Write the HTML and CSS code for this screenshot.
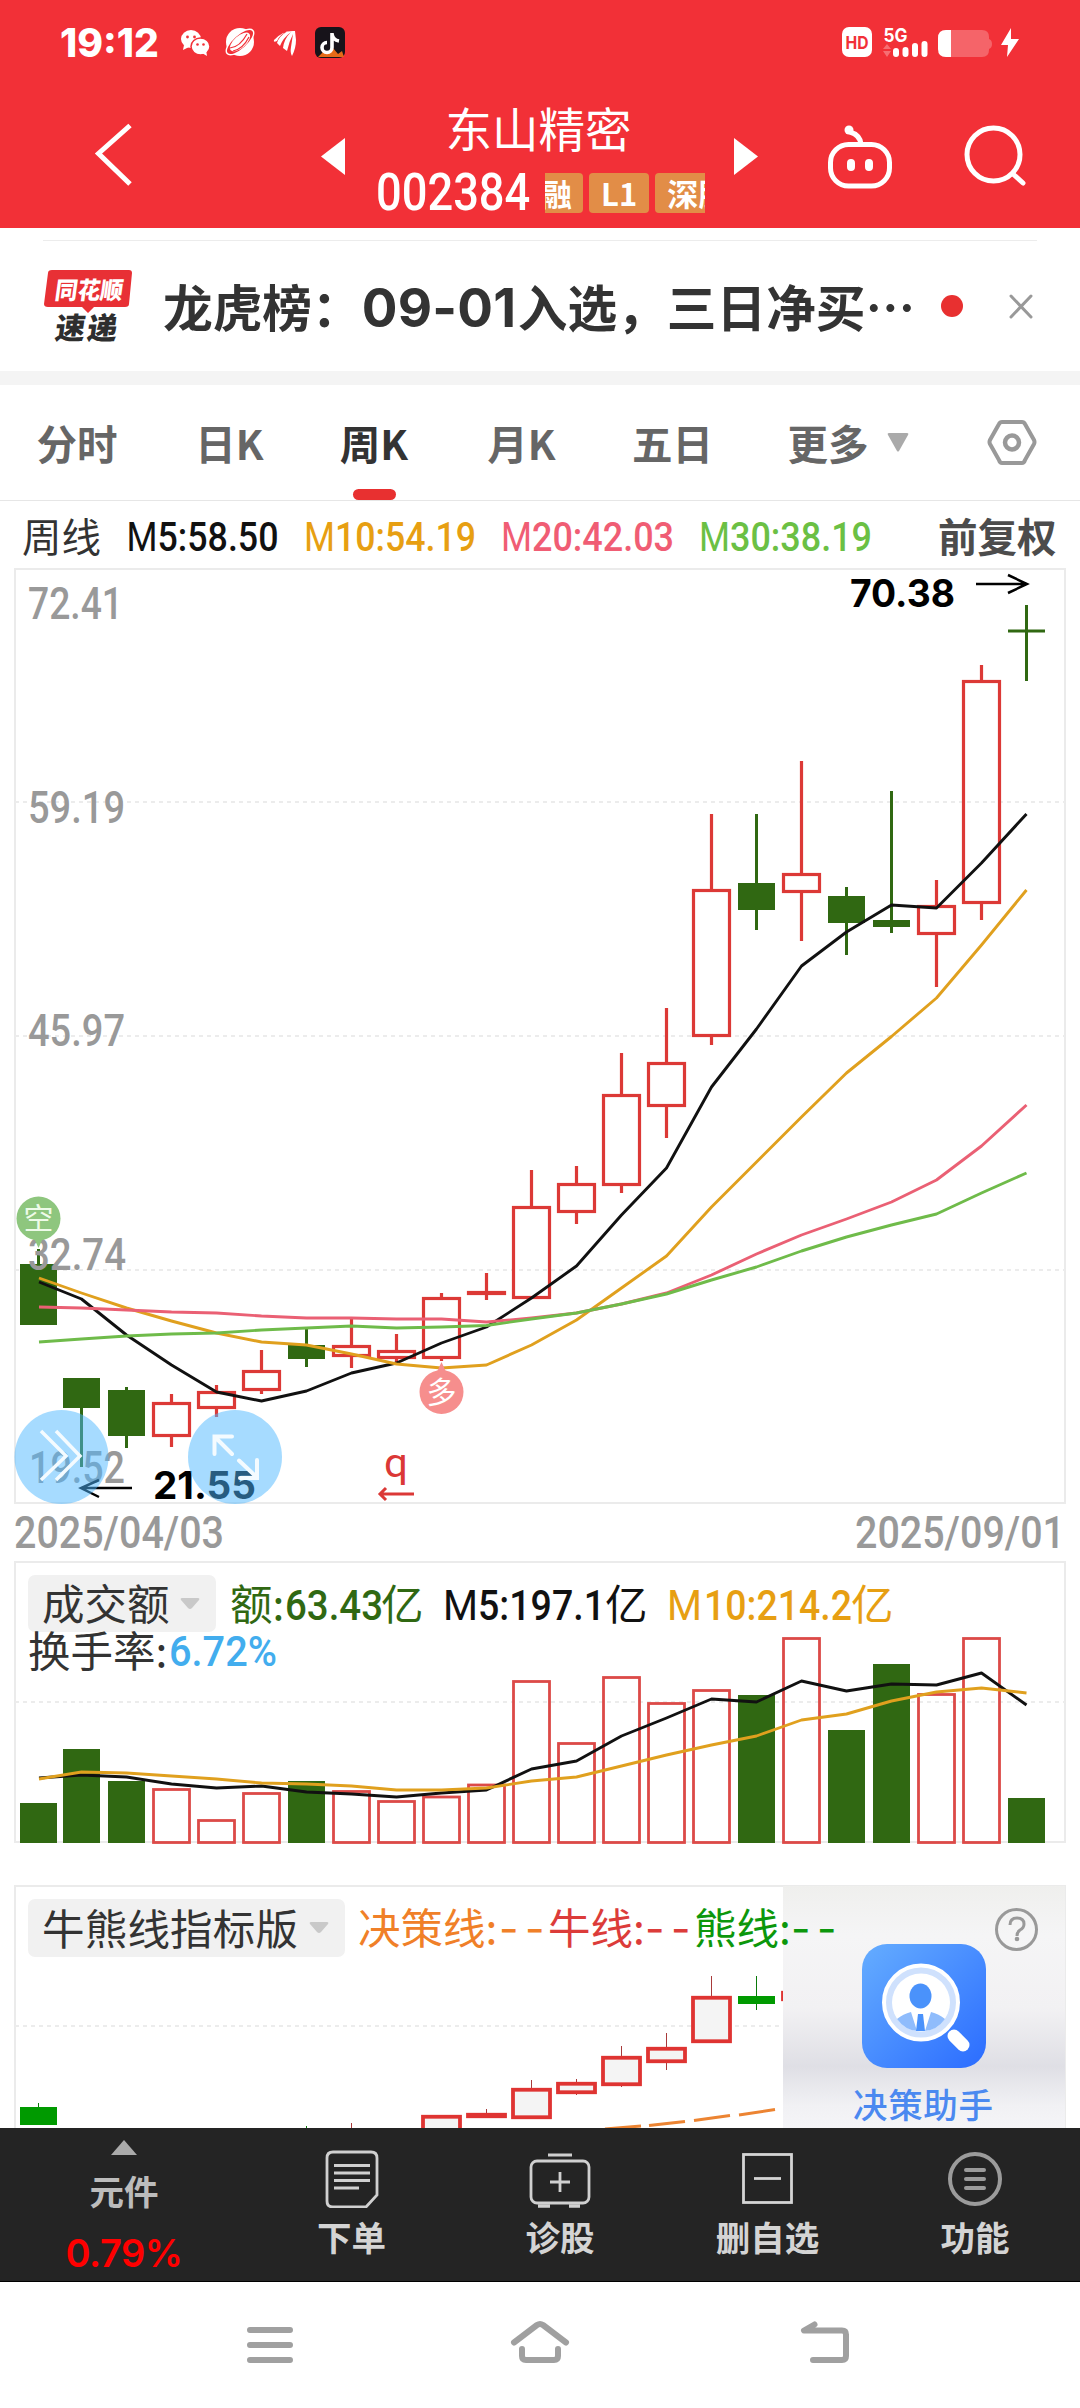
FILE: index.html
```html
<!DOCTYPE html>
<html lang="zh-CN">
<head>
<meta charset="utf-8">
<title>东山精密 002384</title>
<link rel="stylesheet" href="styles.css">
</head>
<body>
<header class="top">
  <div class="status">
    <span class="clock">19:12</span>
    <svg class="status-apps" width="170" height="34" viewBox="178 26 170 34">
      <g fill="#fff">
        <ellipse cx="191" cy="39" rx="10" ry="9"/><path d="M184 45l-1 5 6-3z"/>
        <ellipse cx="200.500" cy="46.500" rx="9.500" ry="8.500" stroke="#f23037" stroke-width="1.500"/><path d="M202 53l5 3-1-6z"/>
        <circle cx="240" cy="42" r="14"/>
      </g>
      <g fill="#f23037"><circle cx="187.500" cy="37" r="1.400"/><circle cx="194.500" cy="37" r="1.400"/><circle cx="197.500" cy="44.500" r="1.300"/><circle cx="203.500" cy="44.500" r="1.300"/></g>
      <ellipse cx="240" cy="42" rx="18" ry="8" transform="rotate(-42 240 42)" fill="#fff"/>
      <ellipse cx="240" cy="42" rx="16.500" ry="6.500" transform="rotate(-42 240 42)" fill="#f23037"/>
      <ellipse cx="240" cy="42" rx="12.500" ry="6" transform="rotate(-42 240 42)" fill="#fff"/>
      <path d="M230 48q10-1 17-14M233 51q10-2 16-14" fill="none" stroke="#f23037" stroke-width="1.200"/>
      <path d="M274 40q9-10 21-9l1 9q0 8-4 16-2-3-1-9l2-13q-4 8-6 17l-4-3q1-9 8-16-8 6-11 14l-3-3q2-7 11-12-8 3-11 10-4 2-3-1z" fill="#fff"/>
      <rect x="315" y="27" width="30" height="31" rx="6" fill="#17131a"/>
      <path d="M318 57l5-5 4 2 6-6 5 6 4-3 2 6z" fill="#e66a18"/>
      <path d="M332 33v14.500a5 5 0 1 1-5-5M332 34q1 6 7 7" fill="none" stroke="#fff" stroke-width="3.600"/>
    </svg>
    <svg class="status-radio" width="186" height="34" viewBox="840 26 186 34">
      <rect x="843" y="27" width="30" height="30" rx="7" fill="#fff"/>
      <text x="846.500" y="49" class="inter" font-size="18" font-weight="700" textLength="23" lengthAdjust="spacingAndGlyphs" fill="#f23037">HD</text>
      <text x="884.500" y="41.500" class="inter" font-size="18.500" font-weight="700" textLength="24" lengthAdjust="spacingAndGlyphs" fill="#fff">5G</text>
      <path d="M884 49l4-5 4 5zM884 51l4 6 4-6z" fill="#fff" opacity=".3"/>
      <path d="M897 51v3M906.500 50v4M916 46v8M925.500 44v10" stroke="#fff" stroke-width="6" stroke-linecap="round"/>
      <path d="M947 30h36q7 0 7 7v2q3 1 3 5t-3 5v1q0 7-7 7h-36q-7 0-7-7V37q0-7 7-7z" fill="#fff" opacity=".25"/>
      <path d="M952 30v27h-5q-8 0-8-8V38q0-8 8-8z" fill="#fff"/>
      <path d="M1012 28l-10 17h7l-1 12 12-18h-8z" fill="#fff"/>
    </svg>
  </div>
  <div class="stockbar">
    <svg class="back" width="60" height="80" viewBox="84 115 60 80"><path d="M130 125.500L98.500 153.500 130 184" fill="none" stroke="#fff" stroke-width="5"/></svg>
    <svg class="prev" width="24" height="37" viewBox="0 0 24 37"><path d="M24 0v37L0 18.500z" fill="#fff"/></svg>
    <div class="stock">
      <div class="name">东山精密</div>
      <div class="code"><span class="num">002384</span><div class="tags"><b class="tag cut">融</b><b class="tag">L1</b><b class="tag">深股通</b></div></div>
    </div>
    <svg class="next" width="24" height="37" viewBox="0 0 24 37"><path d="M0 0v37L24 18.500z" fill="#fff"/></svg>
    <svg class="robot" width="70" height="70" viewBox="826 122 70 70" fill="none" stroke="#fff" stroke-width="5">
      <rect x="831.500" y="144.500" width="59" height="41.500" rx="18"/><path d="M851 132q10 3 11 12"/><circle cx="850" cy="130" r="4.500" fill="#fff" stroke="none"/>
      <path d="M852 163v4M870 163v4" stroke-width="8" stroke-linecap="round"/>
    </svg>
    <svg class="search" width="66" height="66" viewBox="962 122 66 66" fill="none" stroke="#fff" stroke-width="5"><circle cx="994.500" cy="154.500" r="26.500"/><path d="M1014 174l10 9" stroke-linecap="round"/></svg>
  </div>
</header>
<section class="notice">
  <svg class="logo" width="96" height="76" viewBox="40 268 96 76">
    <path d="M52 270h77q3 0 3 3l-3 31q0 3-4 3H94l-6 6-6-6H48q-4 0-4-3l4-31q0-3 4-3z" fill="#e83035"/>
    <text transform="translate(54 299) skewX(-8)" font-size="24" font-weight="900" textLength="68" lengthAdjust="spacingAndGlyphs" fill="#fff">同花顺</text>
    <text transform="translate(54 339) skewX(-8)" font-size="30" font-weight="900" textLength="62" fill="#2e2e2e">速递</text>
  </svg>
  <p class="headline">龙虎榜：<span class="digits">09-01</span>入选，三日净买<span class="dots">⋯</span></p>
  <i class="dot"></i>
  <svg class="close" width="28" height="28" viewBox="1009 292 28 28"><path d="M1013 296l20 21M1033 296l-20 21" stroke="#999" stroke-width="3" stroke-linecap="round"/></svg>
</section>
<nav class="tabs">
  <span>分时</span><span>日K</span><span class="on">周K</span><span>月K</span><span>五日</span>
  <span class="more">更多<svg width="22" height="20" viewBox="0 0 22 20"><path d="M2 0h18q2 0 1 2L12 18q-1 1-2 0L1 2Q0 0 2 0z" fill="#aaa"/></svg></span>
  <svg class="gear" width="50" height="48" viewBox="988 419 50 48" fill="none" stroke="#999"><path d="M1003 422h20q2 0 3 2l9 16q1 2 0 4l-9 16q-1 3-3 3h-20q-2 0-3-3l-9-16q-1-2 0-4l9-16q1-2 3-2z" stroke-width="4"/><circle cx="1013" cy="442.500" r="7" stroke-width="4.500"/></svg>
</nav>
<div class="ma">
  <span class="period">周线</span>
  <svg viewBox="120 501 800 67" width="800" height="67" font-size="40" class="rob" font-weight="500">
    <g fill="#111"><text x="126.500" y="551" font-weight="400" textLength="31" lengthAdjust="spacingAndGlyphs">M</text><text x="157.500" y="551" textLength="121" lengthAdjust="spacingAndGlyphs">5:58.50</text></g>
    <g fill="#e79f12"><text x="304" y="551" font-weight="400" textLength="31" lengthAdjust="spacingAndGlyphs">M</text><text x="335" y="551" textLength="141" lengthAdjust="spacingAndGlyphs">10:54.19</text></g>
    <g fill="#f05d74"><text x="501" y="551" font-weight="400" textLength="31" lengthAdjust="spacingAndGlyphs">M</text><text x="532" y="551" textLength="142" lengthAdjust="spacingAndGlyphs">20:42.03</text></g>
    <g fill="#6bc044"><text x="699" y="551" font-weight="400" textLength="31" lengthAdjust="spacingAndGlyphs">M</text><text x="730" y="551" textLength="142" lengthAdjust="spacingAndGlyphs">30:38.19</text></g>
  </svg>
  <span class="adjust">前复权</span>
</div>
<main>
<svg class="chart" width="1080" height="992" viewBox="0 568 1080 992">
  <rect class="frame" x="15" y="569" width="1050" height="934"/>
  <path class="grid" d="M15 802H1065M15 1036H1065M15 1270H1065"/>
  <g id="kline"></g>
  <g class="rob axis" font-size="43.500" font-weight="500">
    <text x="28" y="619" textLength="95" lengthAdjust="spacingAndGlyphs">72.41</text>
    <text x="28" y="823" textLength="97" lengthAdjust="spacingAndGlyphs">59.19</text>
    <text x="28" y="1046" textLength="97" lengthAdjust="spacingAndGlyphs">45.97</text>
    <text x="28" y="1270" textLength="98" lengthAdjust="spacingAndGlyphs">32.74</text>
    <text x="29" y="1483" textLength="96" lengthAdjust="spacingAndGlyphs">19.52</text>
    <text x="14" y="1548" textLength="210" lengthAdjust="spacingAndGlyphs">2025/04/03</text>
    <text x="855" y="1548" textLength="210" lengthAdjust="spacingAndGlyphs">2025/09/01</text>
  </g>
  <g id="averages"></g>
  <g class="inter" font-size="38" font-weight="700" fill="#000">
    <text x="850" y="607" textLength="105" lengthAdjust="spacingAndGlyphs">70.38</text>
    <text x="153" y="1499" textLength="103" lengthAdjust="spacingAndGlyphs">21.55</text>
  </g>
  <path d="M976 584H1027M1008 575l19 9-19 9M132 1488H81M99 1480l-18 8 18 9" fill="none" stroke="#000" stroke-width="2.500"/>
  <g><path d="M33 1236l5.500 12 5.500-12z" fill="#8ec67e"/><circle cx="38.500" cy="1218.500" r="22" fill="#8ec67e"/><text x="38.500" y="1229" font-size="30" text-anchor="middle" fill="#eefbe9">空</text></g>
  <g><path d="M436 1374l5.500-12 5.500 12z" fill="#f68e8d"/><circle cx="441.500" cy="1392" r="22" fill="#f68e8d"/><text x="441.500" y="1403" font-size="30" text-anchor="middle" fill="#fff">多</text></g>
  <text x="384" y="1477" font-size="41" class="rob" textLength="24" lengthAdjust="spacingAndGlyphs" fill="#db3836">q</text>
  <path d="M414 1494H380M386 1488l-6 6 6 6" fill="none" stroke="#db3836" stroke-width="3"/>
  <g fill="#4db8ff" fill-opacity=".5"><circle cx="61.500" cy="1457" r="47"/><circle cx="235" cy="1457" r="47"/></g>
  <g fill="none" stroke="#f4fbff" stroke-width="3.500"><path d="M41 1431l25 25-25 24M56 1431l24 25-24 24"/><path d="M232 1436.500h-17.500V1454M215 1437l17 17M240 1478h17v-18M239 1460.500l18 17" stroke-width="4" stroke-linecap="round"/></g>
</svg>
<svg class="chart" width="1080" height="320" viewBox="0 1560 1080 320">
  <rect class="frame" x="15" y="1562" width="1050" height="280"/>
  <path class="grid" d="M15 1702H1065"/>
  <rect x="28" y="1575" width="188" height="57" rx="7" fill="#f1f1f1"/>
  <path d="M182 1598h16q2 0 1 2l-7 8q-2 2-4 0l-7-8q-1-2 1-2z" fill="#c9c9c9"/>
  <g font-size="42.500">
    <text x="42" y="1620" class="dark">成交额</text>
    <text x="230" y="1620" fill="#306812">额:</text><text x="285" y="1620" class="rob" font-weight="500" textLength="98" lengthAdjust="spacingAndGlyphs" fill="#306812">63.43</text><text x="381" y="1620" fill="#306812">亿</text>
    <text x="443" y="1620" class="rob" textLength="35" lengthAdjust="spacingAndGlyphs" fill="#111">M</text><text x="478" y="1620" class="rob" font-weight="500" textLength="127" lengthAdjust="spacingAndGlyphs" fill="#111">5:197.1</text><text x="605" y="1620" fill="#111">亿</text>
    <text x="667" y="1620" class="rob" textLength="35" lengthAdjust="spacingAndGlyphs" fill="#e79f12">M</text><text x="704" y="1620" class="rob" font-weight="500" textLength="148" lengthAdjust="spacingAndGlyphs" fill="#e79f12">10:214.2</text><text x="851" y="1620" fill="#e79f12">亿</text>
    <text x="28" y="1667" class="dark">换手率:</text><text x="169" y="1666" class="rob" font-weight="500" textLength="108" lengthAdjust="spacingAndGlyphs" fill="#42adee">6.72%</text>
  </g>
  <g id="volume"></g>
</svg>
<svg class="chart" width="1080" height="248" viewBox="0 1880 1080 248">
  <defs>
    <linearGradient id="app" x1="0" y1="0" x2="1" y2="1"><stop offset="0" stop-color="#65adff"/><stop offset="1" stop-color="#2b6cff"/></linearGradient>
    <linearGradient id="mist" x1="0" y1="0" x2="0" y2="1"><stop offset="0" stop-color="#efefed"/><stop offset=".2" stop-color="#f5f5f6"/><stop offset=".5" stop-color="#f2f1f3"/><stop offset=".74" stop-color="#dfdfe5"/><stop offset=".9" stop-color="#f1f1f4"/><stop offset="1" stop-color="#f5f5f8"/></linearGradient>
  </defs>
  <path class="frame" d="M15 2130V1886H1065V2130"/>
  <path class="grid" d="M15 2026H1065"/>
  <g id="bull"></g>
  <path d="M605 2129l36-3M649 2125.500l36-4M694 2120.500l36-5M739 2115l36-5.500" stroke="#ec8432" stroke-width="3"/>
  <rect x="783" y="1886" width="282" height="244" fill="url(#mist)"/>
  <rect x="28" y="1899" width="317" height="58" rx="7" fill="#f1f1f1"/>
  <path d="M311 1922h16q2 0 1 2l-7 8q-2 2-4 0l-7-8q-1-2 1-2z" fill="#c9c9c9"/>
  <g font-size="42.500">
    <text x="42" y="1945" class="dark" textLength="256">牛熊线指标版</text>
    <g fill="#f08028"><text x="358" y="1944">决策线:</text><text x="499 525" y="1944" class="inter">--</text></g>
    <g fill="#dc3c3a"><text x="548" y="1944">牛线:</text><text x="645 671" y="1944" class="inter">--</text></g>
    <g fill="#0c970c"><text x="694" y="1944">熊线:</text><text x="791 817" y="1944" class="inter">--</text></g>
  </g>
  <rect x="862" y="1944" width="124" height="124" rx="25" fill="url(#app)"/>
  <path d="M954 2036l9 9" stroke="#fff" stroke-width="13" stroke-linecap="round"/>
  <circle cx="921" cy="2002.500" r="37" fill="#cfe1fd" stroke="#fff" stroke-width="4"/>
  <circle cx="921" cy="2002.500" r="29" fill="#fff"/>
  <path d="M897 2019q6-5 14-7l6 19q-12-1-20-12zM945 2019q-6-5-14-7l-6 19q12-1 20-12z" fill="#8fbcfc"/>
  <ellipse cx="920.500" cy="1996" rx="11" ry="12.500" fill="#4a92fb"/>
  <path d="M918 2014h5l2 17h-9z" fill="#4a92fb"/>
  <text x="853" y="2118" font-size="34.500" font-weight="500" textLength="140" fill="#4b89f0">决策助手</text>
  <circle cx="1016.500" cy="1929.500" r="20" fill="none" stroke="#999" stroke-width="3"/>
  <path d="M1010 1925q0-7 7-7t7 6q0 4-4 6-3 2-3 6" fill="none" stroke="#999" stroke-width="3"/><circle cx="1017" cy="1939" r="2.300" fill="#999"/>
</svg>
</main>
<footer class="actions">
  <div class="item index"><svg width="26" height="15" viewBox="0 0 26 15"><path d="M0 15L13 0l13 15z" fill="#aaa"/></svg><span>元件</span><b>0.79%</b></div>
  <div class="item"><svg width="60" height="60" viewBox="322 2148 60 60" fill="none" stroke="#d0d0d0" stroke-width="2.800"><path d="M333 2152h38q6 0 6 6v37l-11 12h-33q-6 0-6-6v-43q0-6 6-6z"/><path d="M334 2165.500h36M334 2173h36M334 2180.500h36M334 2188h25"/></svg><span>下单</span></div>
  <div class="item"><svg width="64" height="60" viewBox="528 2148 64 60" fill="none" stroke="#d0d0d0" stroke-width="2.800"><rect x="531" y="2161" width="58" height="42" rx="6"/><path d="M548 2155h24M550 2182h20M560 2172v20"/><path d="M538 2206h12M569 2206h11" stroke-width="3.500"/></svg><span>诊股</span></div>
  <div class="item"><svg width="60" height="60" viewBox="738 2148 60 60" fill="none" stroke="#d4d4d4" stroke-width="2.800"><rect x="743.500" y="2154.500" width="48" height="48"/><path d="M754 2178.500h27"/></svg><span>删自选</span></div>
  <div class="item"><svg width="60" height="60" viewBox="946 2148 60 60" fill="none" stroke="#9b9b9b" stroke-width="4"><circle cx="976" cy="2179" r="25"/><path d="M967 2170h18M967 2179h18M967 2188h18" stroke-linecap="round"/></svg><span>功能</span></div>
</footer>
<div class="system">
  <svg width="60" height="50" viewBox="240 2320 60 50"><path d="M250 2330h40M250 2345h40M250 2360h40"/></svg>
  <svg width="70" height="50" viewBox="505 2320 70 50"><path d="M514 2342.500L537 2325q3-2 6 0l23 17.500M522 2349v7q0 4 4 4h28q4 0 4-4v-7"/></svg>
  <svg width="60" height="50" viewBox="796 2320 60 50"><path d="M814.500 2324.500L804 2330.500h38q4 0 4 4V2356q0 4-4 4h-29"/></svg>
</div>
<script src="chart.js"></script>
</body>
</html>
```
FILE: styles.css
```css
* { box-sizing: border-box; }
body { margin: 0; width: 1080px; height: 2408px; overflow: hidden; background: #fff; font-family: "Noto Sans CJK SC", sans-serif; color: #333; }
svg { display: block; flex: none; }
svg text { font-family: "Noto Sans CJK SC", sans-serif; }
.rob text, text.rob { font-family: Roboto, sans-serif; }
.inter text, text.inter { font-family: Inter, sans-serif; }

.top { height: 228px; background: #f23037; color: #fff; }
.status { height: 84px; padding: 26px 55px 0 60px; display: flex; align-items: flex-start; }
.clock { font: 800 39px/34px Inter, sans-serif; width: 118px; }
.status-radio { margin-left: auto; }
.stockbar { height: 144px; display: flex; align-items: flex-start; }
.back { margin: 31px 0 0 84px; }
.prev { margin: 54px 0 0 177px; }
.stock { width: 342px; margin-left: 26px; padding: 0 8px; }
.name { height: 84px; font-size: 46.500px; line-height: 86px; text-align: center; margin-left: -7px; font-weight: 400; }
.code { display: flex; height: 50px; align-items: center; }
.num { width: 164px; font: 500 52px/50px Roboto, sans-serif; white-space: nowrap; transform: scaleX(.87); transform-origin: 0 50%; margin-left: -3px; }
.tags { display: flex; gap: 6px; width: 160px; margin-left: 5px; overflow: hidden; align-items: center; height: 42px; }
.tag { flex: none; height: 40px; padding: 0 12px; border-radius: 4px; background: #e28d47; font: 700 31px/40px "Noto Sans CJK SC", sans-serif; }
.tag.cut { padding: 0 11px 0 0; margin-left: -4px; }
.next { margin: 54px 0 0 21px; }
.robot { margin: 38px 0 0 67px; }
.search { margin: 38px 0 0 66px; }

.notice { height: 157px; border-bottom: 14px solid #f4f4f4; padding: 13px 43px 0 40px; display: flex; align-items: center; background: linear-gradient(#ececec, #ececec) 43px 12px / 994px 1px no-repeat; }
.headline { margin: 0 0 0 27px; width: 772px; white-space: nowrap; font: 700 49.700px/70px "Noto Sans CJK SC", sans-serif; height: 72px; }
.digits { display: inline-block; width: 156px; font: 700 53px/60px Inter, sans-serif; letter-spacing: .2px; }
.dots { display: inline-block; }
.dot { width: 22px; height: 22px; border-radius: 50%; background: #e83030; margin-left: 6px; }
.close { margin-left: 44px; }

.tabs { height: 116px; border-bottom: 1px solid #e6e6e6; display: grid; grid-template-columns: 154px 151px 138px 157px 145px 199px 1fr; align-items: center; font: 700 40.500px/60px "Noto Sans CJK SC", sans-serif; color: #666; }
.tabs span { text-align: center; position: relative; }
.tabs .on { color: #333; }
.tabs .on::after { content: ""; position: absolute; left: 50%; margin-left: -21px; bottom: -27px; width: 43px; height: 11px; border-radius: 6px; background: #e83030; }
.tabs .more { display: flex; align-items: center; justify-content: center; gap: 18px; padding-left: 7px; }
.gear { margin-left: 43px; }

.ma { height: 67px; display: flex; align-items: center; padding-left: 22px; }
.period { width: 98px; font-size: 39.500px; line-height: 66px; }
.adjust { font-size: 39.500px; line-height: 66px; font-weight: 700; color: #4c4c4c; margin-left: 18px; }

.chart { font-weight: 400; }
.frame { fill: none; stroke: #ebebeb; stroke-width: 2; }
.grid { fill: none; stroke: #ececec; stroke-width: 2; stroke-dasharray: 4 4; }
.axis { fill: #999; }
.dark { fill: #333; }
.line { fill: none; stroke-width: 2.900; stroke-linejoin: round; }
.up { fill: none; stroke: #dc3936; stroke-width: 3.200; }
.down { fill: #306812; }
.volume-up { fill: none; stroke: #dc4a48; stroke-width: 2.800; }
.bull-up { fill: #f4f4f4; stroke: #df3432; stroke-width: 3.800; }
.bull-down { fill: #009a00; }

.actions { height: 154px; background: #242424; border-bottom: 1px solid #000; display: grid; grid-template-columns: 248px 207px 210px 205px 210px; color: #d4d4d4; }
.item { display: flex; flex-direction: column; align-items: center; padding-top: 20px; font: 700 34.500px/56px "Noto Sans CJK SC", sans-serif; }
.index { padding-top: 12px; color: #bcbcbc; }
.index span { line-height: 60px; margin-top: 5px; }
.index b { font: 600 38px/40px Inter, sans-serif; color: #f00; margin-top: 13px; letter-spacing: -.5px; }
.system { height: 126px; display: flex; align-items: flex-start; padding: 38px 0 0 240px; }
.system svg { fill: none; stroke: #a0a0a0; stroke-width: 6; stroke-linecap: round; stroke-linejoin: round; }
.system svg:nth-child(2) { margin-left: 205px; }
.system svg:nth-child(3) { margin-left: 221px; }
```
FILE: chart.js
```js
// Candle rows: [direction, high, body top, body bottom, low] in chart units.
const candles = [
  ["d", 1249, 1264, 1325, 1325], ["d", 1378, 1378, 1408, 1467], ["d", 1387, 1390, 1436, 1448],
  ["u", 1394, 1402, 1437, 1447], ["u", 1385, 1391, 1409, 1417], ["u", 1350, 1370, 1391, 1394],
  ["d", 1329, 1345, 1359, 1367], ["u", 1319, 1345, 1357, 1368], ["u", 1334, 1350, 1359, 1362],
  ["u", 1293, 1297, 1359, 1361], ["u", 1273, 1291, 1295, 1300], ["u", 1170, 1206, 1299, 1299],
  ["u", 1166, 1183, 1213, 1224], ["u", 1053, 1094, 1186, 1193], ["u", 1008, 1062, 1107, 1138],
  ["u", 814, 889, 1037, 1045], ["d", 814, 883, 910, 930], ["u", 761, 873, 893, 941],
  ["d", 887, 896, 923, 955], ["d", 791, 920, 927, 933], ["u", 880, 905, 935, 987],
  ["u", 665, 680, 904, 920], ["d", 605, 629.5, 632.5, 681]
];
const averages = {
  "#111": [1282, 1299, 1335, 1365, 1392, 1401, 1391, 1373, 1363, 1343, 1327, 1298, 1266, 1215, 1168, 1087, 1029, 966, 932, 905, 908, 863, 814],
  "#e0a01e": [1278, 1293, 1308, 1321, 1333, 1342, 1345, 1354, 1364, 1368, 1365, 1345, 1320, 1288, 1256, 1207, 1162, 1117, 1073, 1036.5, 998, 945, 890],
  "#ea6074": [1307, 1308, 1310, 1312, 1313, 1316, 1318, 1318, 1319, 1319, 1322, 1318, 1313, 1304, 1293, 1275, 1254, 1235, 1219, 1202, 1180, 1146, 1105],
  "#6fbb4a": [1342, 1339, 1336, 1334, 1333, 1330, 1328, 1326, 1328, 1327, 1325.5, 1319, 1313, 1304, 1294, 1280, 1267, 1251, 1237, 1225, 1214, 1193, 1173]
};
const volumes = [1803, 1749, 1781, 1788, 1819, 1792, 1781, 1790, 1800, 1795.5, 1783.5, 1680, 1742, 1676, 1702, 1689, 1695, 1637, 1730, 1664, 1693, 1637, 1798];
const volumeAverages = {
  "#111": [1778, 1775, 1777, 1784, 1788, 1786, 1792, 1794, 1797, 1793, 1790, 1769, 1761, 1736, 1718, 1699, 1702, 1681, 1691, 1684, 1685, 1673, 1705],
  "#e0a01e": [1779, 1772, 1773, 1776, 1779, 1783, 1784, 1786, 1790, 1790, 1788, 1781, 1777, 1766, 1755, 1745, 1736, 1720, 1714, 1701, 1692, 1688, 1693]
};
// Bull/bear rows: [slot, direction, high, body top, body bottom, low].
const bull = [
  [0, "d", 2103, 2107, 2125, 2125], [6, "d", 2126, 2130, 2134, 2134], [7, "u", 2123, 2134, 2140, 2140],
  [9, "u", 2115, 2115, 2140, 2140], [10, "u", 2109, 2113, 2118, 2118], [11, "u", 2080, 2088, 2119, 2119],
  [12, "u", 2079, 2082, 2094, 2095], [13, "u", 2046, 2056, 2086, 2087], [14, "u", 2033, 2047, 2063, 2070],
  [15, "u", 1976, 1996, 2043, 2043], [16, "d", 1976, 1996, 2004, 2010], [17, "u", 1991, 1991, 2001, 2001]
];

const x = i => i === 0 ? 38.5 : 36.5 + i * 45;
const rect = (cls, left, top, w, h) => `<rect class="${cls}" x="${left}" y="${top}" width="${w}" height="${Math.max(h, 1)}"/>`;
const lines = sets => Object.entries(sets).map(([color, ys]) =>
  `<polyline class="line" stroke="${color}" points="${ys.map((y, i) => (x(i) + (i ? 0 : .5)) + "," + y).join(" ")}"/>`).join("");

document.getElementById("kline").innerHTML = candles.map(([dir, high, top, bottom, low], i) => {
  const c = x(i);
  if (dir === "d") return rect("down", c - 18.5, top, 37, bottom - top) + rect("down", c - 1.5, high, 3, low - high);
  return rect("up", c - 18, top + 1.5, 36, bottom - top - 3) + `<path class="up" d="M${c} ${high}V${top}M${c} ${bottom}V${low}"/>`;
}).join("");
document.getElementById("averages").innerHTML = lines(averages);

document.getElementById("volume").innerHTML = volumes.map((top, i) =>
  candles[i][0] === "d" ? rect("down", x(i) - 18.5, top, 37, 1843 - top) : rect("volume-up", x(i) - 18, top + 1.5, 36, 1841 - top)
).join("") + lines(volumeAverages);

document.getElementById("bull").innerHTML = bull.map(([i, dir, high, top, bottom, low]) => {
  const c = x(i);
  const wick = `<path d="M${c} ${high}V${top}M${c} ${bottom}V${low}" stroke="${dir === "d" ? "#0a7a0a" : "#a83a3a"}"/>`;
  return wick + (dir === "d" ? rect("bull-down", c - 18.5, top, 37, bottom - top) : rect("bull-up", c - 18.5, top + 1.75, 37, bottom - top - 3.5));
}).join("");
```
